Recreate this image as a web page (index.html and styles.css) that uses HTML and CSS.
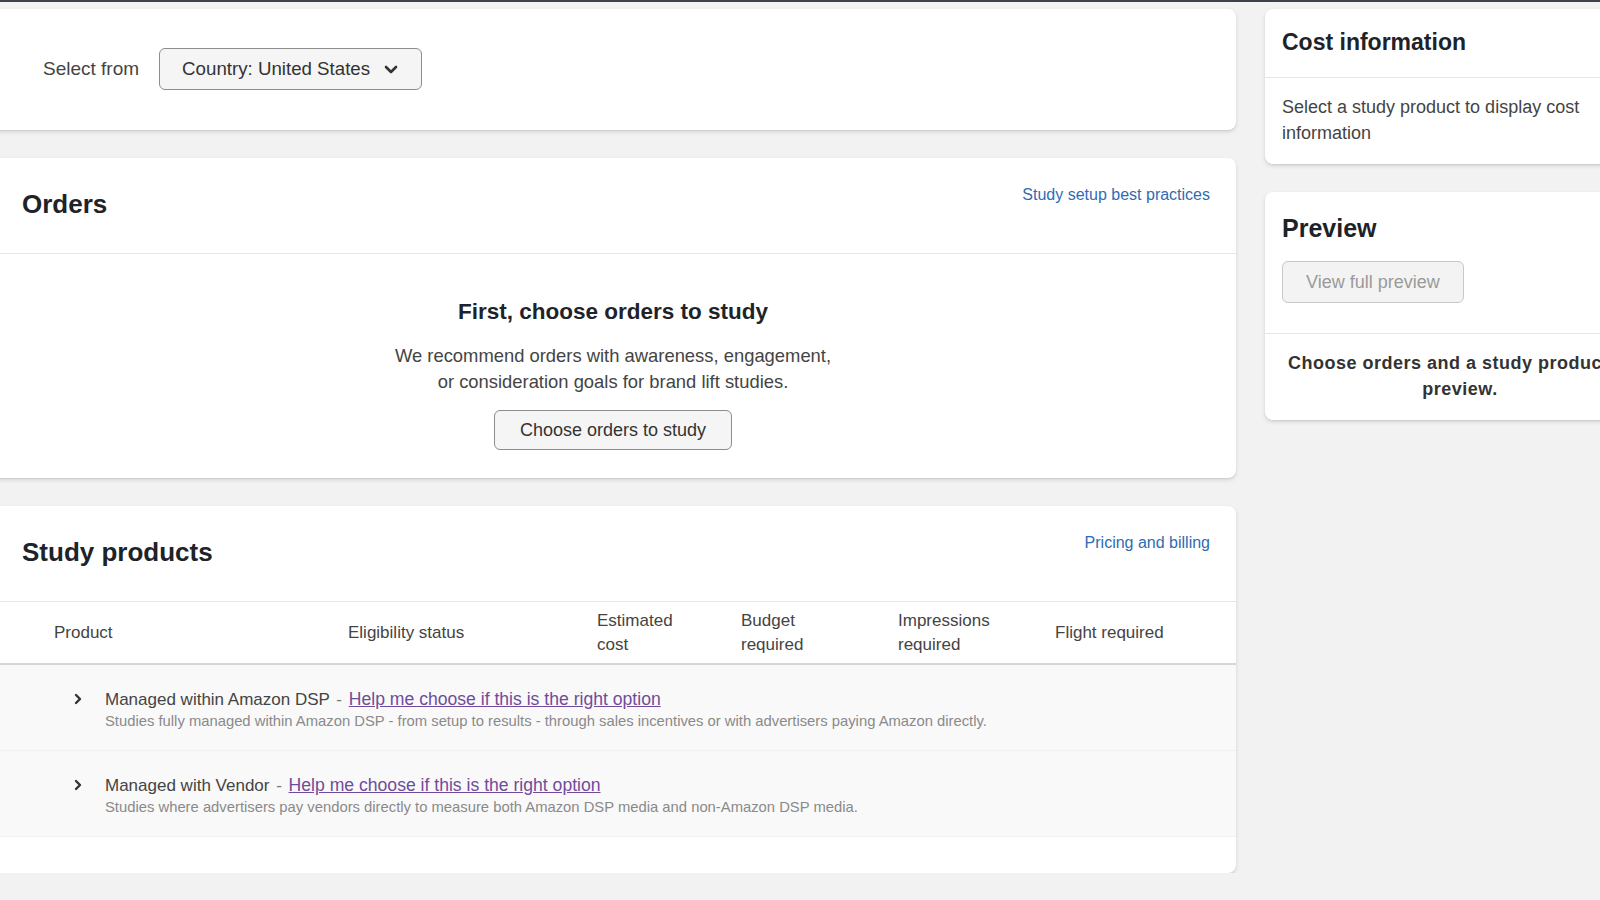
FILE: index.html
```html
<!doctype html>
<html lang="en">
	<head>
		<meta charset="UTF-8" />
		<meta name="viewport" content="width=device-width, initial-scale=1.0" />
		<title>Create brand lift study</title>
		<link rel="stylesheet" href="styles.css">
	</head>
	<body>
		<div class="topbar"></div>
		<div class="page">
			<div class="main">
				<div class="card select-bar">
					<span class="select-label">Select from</span>
					<button class="dropdown">
						Country: United States
						<svg width="14" height="9" viewBox="0 0 14 9"><polyline points="2,2 7,7 12,2" fill="none" stroke="#333" stroke-width="2.6" stroke-linecap="round" stroke-linejoin="round"/></svg>
					</button>
				</div>

				<div class="card">
					<div class="card-header">
						<h2>Orders</h2>
						<a class="link" href="#">Study setup best practices</a>
					</div>
					<div class="empty">
						<h3>First, choose orders to study</h3>
						<p>We recommend orders with awareness, engagement,<br>or consideration goals for brand lift studies.</p>
						<button class="btn">Choose orders to study</button>
					</div>
				</div>

				<div class="card products">
					<div class="card-header">
						<h2>Study products</h2>
						<a class="link" href="#">Pricing and billing</a>
					</div>
					<div class="table-head">
						<div>Product</div>
						<div>Eligibility status</div>
						<div>Estimated<br>cost</div>
						<div>Budget<br>required</div>
						<div>Impressions<br>required</div>
						<div>Flight required</div>
					</div>
					<div class="row">
						<svg class="chev" width="10" height="12" viewBox="0 0 10 12"><polyline points="3,2 7,6 3,10" fill="none" stroke="#333" stroke-width="2.4" stroke-linecap="round" stroke-linejoin="round"/></svg>
						<div>
							<div class="row-title">Managed within Amazon DSP <span class="dash">-</span> <a class="visited" href="#">Help me choose if this is the right option</a></div>
							<div class="row-desc">Studies fully managed within Amazon DSP - from setup to results - through sales incentives or with advertisers paying Amazon directly.</div>
						</div>
					</div>
					<div class="row">
						<svg class="chev" width="10" height="12" viewBox="0 0 10 12"><polyline points="3,2 7,6 3,10" fill="none" stroke="#333" stroke-width="2.4" stroke-linecap="round" stroke-linejoin="round"/></svg>
						<div>
							<div class="row-title">Managed with Vendor <span class="dash">-</span> <a class="visited" href="#">Help me choose if this is the right option</a></div>
							<div class="row-desc">Studies where advertisers pay vendors directly to measure both Amazon DSP media and non-Amazon DSP media.</div>
						</div>
					</div>
				</div>
			</div>

			<div class="side">
				<div class="card">
					<div class="side-header">
						<h4>Cost information</h4>
					</div>
					<p class="side-text">Select a study product to display cost information</p>
				</div>

				<div class="card">
					<div class="preview-top">
						<h2>Preview</h2>
						<button class="btn disabled">View full preview</button>
					</div>
					<p class="preview-note">Choose orders and a study product to preview.</p>
				</div>
			</div>
		</div>
	</body>
</html>
```

FILE: styles.css
```css
body {
	margin: 0;
	background: #f2f2f2;
	font-family: "Liberation Sans", Arial, sans-serif;
	color: #333;
	overflow: hidden;
}
.topbar {
	height: 2px;
	background: #3d424a;
}
.page {
	display: grid;
	grid-template-columns: 1246px 390px;
	column-gap: 29px;
	margin-left: -10px;
	padding-top: 7px;
	align-items: start;
}
.main, .side {
	display: flex;
	flex-direction: column;
	gap: 28px;
}
.card {
	background: #fff;
	border-radius: 8px;
	box-shadow: 0 1px 1px rgba(0,0,0,0.06), 0 2px 4px rgba(0,0,0,0.12);
}
h2 {
	margin: 0;
	font-size: 26px;
	line-height: 32px;
	color: #1e2329;
}
.select-bar {
	display: flex;
	align-items: center;
	gap: 20px;
	padding: 39px 53px 40px;
}
.select-label {
	font-size: 19px;
	color: #444;
}
.dropdown {
	display: flex;
	align-items: center;
	gap: 14px;
	height: 42px;
	padding: 0 23px 0 22px;
	border: 1px solid #8d8d8d;
	border-radius: 6px;
	background: #f5f5f5;
	font-family: inherit;
	font-size: 18.7px;
	color: #333;
}
.card-header {
	display: flex;
	justify-content: space-between;
	align-items: flex-start;
	padding: 27px 26px 33px 32px;
	border-bottom: 1px solid #e6e6e6;
}
.card-header h2 {
	margin-top: 3px;
}
.link {
	font-size: 16px;
	line-height: 20px;
	color: #2f6cb3;
	text-decoration: none;
}
.empty {
	text-align: center;
	padding: 44px 0 28px;
}
.empty h3 {
	margin: 0;
	font-size: 22.5px;
	line-height: 28px;
	color: #1e2329;
}
.empty p {
	margin: 17px 0 15px;
	font-size: 18.4px;
	line-height: 26px;
	color: #444;
}
.btn {
	height: 40px;
	padding: 0 25px;
	border: 1px solid #8d8d8d;
	border-radius: 6px;
	background: #f5f5f5;
	font-family: inherit;
	font-size: 18px;
	color: #333;
}
.btn.disabled {
	height: 42px;
	padding: 0 23px;
	border-color: #c8c8c8;
	background: #f3f3f3;
	color: #9a9a9a;
}
.products {
	padding-bottom: 36px;
}
.table-head {
	display: grid;
	grid-template-columns: 294px 249px 144px 157px 157px 1fr;
	align-items: center;
	padding: 7px 0 6px 64px;
	border-bottom: 2px solid #d6d6d6;
	font-size: 17px;
	line-height: 24px;
	color: #444;
}
.row {
	display: flex;
	align-items: flex-start;
	gap: 22px;
	padding: 23px 0 20px 83px;
	background: #f9f9f9;
	border-bottom: 1px solid #f1f1f1;
}
.chev {
	margin-top: 5px;
}
.row-title {
	font-size: 17px;
	line-height: 22px;
	color: #444;
}
.row-title .visited {
	font-size: 17.6px;
}
.dash {
	color: #777;
	margin: 0 2px;
}
.visited {
	color: #6f4c9b;
	text-decoration: underline;
}
.row-desc {
	margin-top: 1px;
	font-size: 14.8px;
	line-height: 18px;
	color: #8a8a8a;
}
.side-header {
	padding: 19px 17px 21px;
	border-bottom: 1px solid #e6e6e6;
}
.side-header h4 {
	margin: 0;
	font-size: 23px;
	line-height: 28px;
	color: #1e2329;
}
.side-text {
	margin: 0;
	padding: 16px 17px 18px;
	font-size: 18px;
	line-height: 26px;
	color: #444;
}
.preview-top {
	padding: 21px 17px 30px;
	border-bottom: 1px solid #e6e6e6;
}
.preview-top h2 {
	font-size: 25px;
	line-height: 30px;
	margin-bottom: 18px;
}
.preview-note {
	margin: 0;
	padding: 16px 17px 18px;
	text-align: center;
	font-size: 18px;
	font-weight: bold;
	letter-spacing: 0.5px;
	line-height: 26px;
	color: #333;
}
```
